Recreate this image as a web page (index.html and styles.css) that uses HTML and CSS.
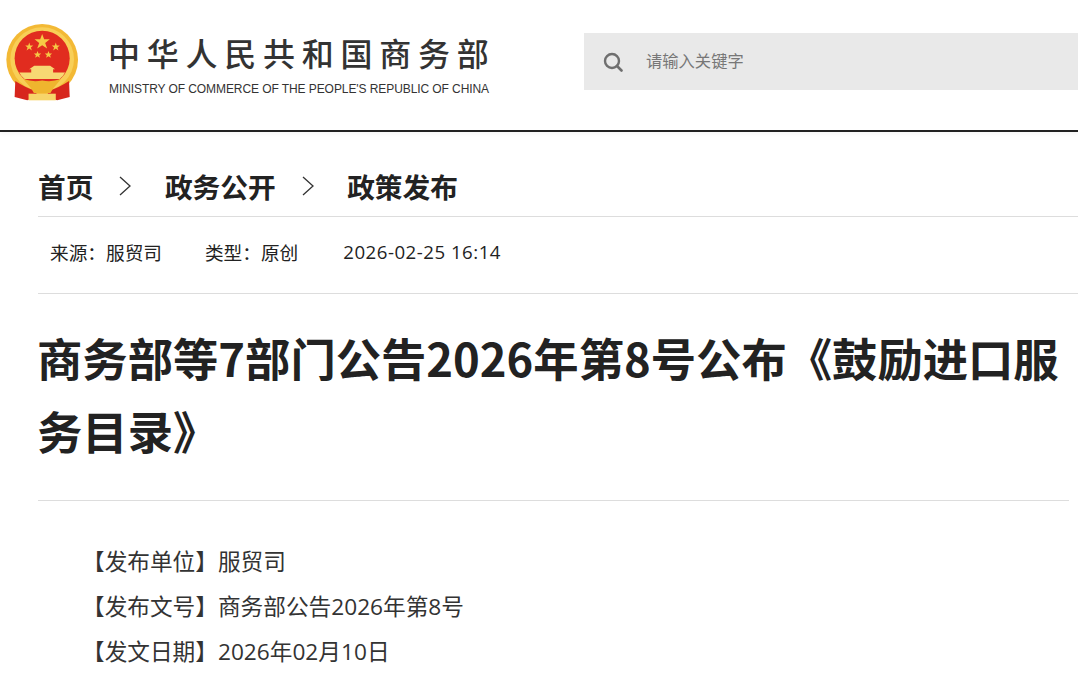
FILE: index.html
```html
<!DOCTYPE html>
<html lang="zh-CN">
<head>
    <meta charset="UTF-8">
    <title>商务部等7部门公告2026年第8号公布《鼓励进口服务目录》</title>
    <link rel="stylesheet" href="styles.css">
</head>
<body>
    <header class="top">
        <div class="brand">
            <svg class="emblem" width="73" height="77" viewBox="18 42 220 232">
                <circle cx="127" cy="150" r="108" fill="#f3b935"/>
                <circle cx="127" cy="148" r="96" fill="#f8cf57"/>
                <circle cx="127" cy="145" r="83" fill="#e12c1f"/>
                <polygon fill="#f6c945" points="127,72 133,88 150,88 136,99 142,116 127,106 112,116 118,99 104,88 121,88"/>
                <polygon fill="#f6c945" points="88,98 91,107 100,107 93,113 96,122 88,116 80,122 83,113 76,107 85,107"/>
                <polygon fill="#f6c945" points="168,98 171,107 180,107 173,113 176,122 168,116 160,122 163,113 156,107 165,107"/>
                <polygon fill="#f6c945" points="113,123 116,131 124,131 118,136 120,144 113,139 106,144 108,136 102,131 110,131"/>
                <polygon fill="#f6c945" points="146,123 149,131 157,131 151,136 153,144 146,139 139,144 141,136 135,131 143,131"/>
                <path d="M103 168 H151 L166 178 H160 V188 H196 Q190 200 180 208 H74 Q64 200 58 188 H94 V178 H88 Z" fill="#f7d873"/>
                <path d="M46 214 Q80 236 108 244 L112 262 L82 272 L44 262 Z" fill="#d7261d"/>
                <path d="M208 214 Q174 236 146 244 L142 262 L172 272 L210 262 Z" fill="#d7261d"/>
                <path d="M70 208 Q100 218 127 212 Q154 218 184 208 L160 236 L152 250 H102 L94 236 Z" fill="#efb52e"/>
                <rect x="86" y="252" width="82" height="20" fill="#f7d56a"/>
            </svg>
            <div class="brand-text">
                <div class="brand-cn">中华人民共和国商务部</div>
                <div class="brand-en">MINISTRY OF COMMERCE OF THE PEOPLE'S REPUBLIC OF CHINA</div>
            </div>
        </div>
        <div class="search">
            <svg class="search-icon" width="20" height="20" viewBox="0 0 20 20">
                <circle cx="9" cy="9" r="7" fill="none" stroke="#6f6f6f" stroke-width="2.4"/>
                <path d="M14 14 L18.5 18.5" stroke="#6f6f6f" stroke-width="2.6" stroke-linecap="round"/>
            </svg>
            <span class="search-hint">请输入关键字</span>
        </div>
    </header>

    <main class="page">
        <nav class="crumbs">
            <a>首页</a>
            <svg class="arrow" width="14" height="20" viewBox="0 0 14 20"><path d="M2 1 L12 10 L2 19" fill="none" stroke="#333" stroke-width="1.3"/></svg>
            <a>政务公开</a>
            <svg class="arrow" width="14" height="20" viewBox="0 0 14 20"><path d="M2 1 L12 10 L2 19" fill="none" stroke="#333" stroke-width="1.3"/></svg>
            <a>政策发布</a>
        </nav>
        <div class="meta">
            <span>来源&#xFF1A;服贸司</span>
            <span>类型&#xFF1A;原创</span>
            <span class="date">2026-02-25 16:14</span>
        </div>
        <div class="article">
            <div class="title-wrap">
                <h1 class="title">商务部等7部门公告2026年第8号公布《鼓励进口服务目录》</h1>
            </div>
            <div class="content">
                <p>【发布单位】服贸司</p>
                <p>【发布文号】商务部公告2026年第8号</p>
                <p>【发文日期】2026年02月10日</p>
            </div>
        </div>
    </main>
</body>
</html>
```
FILE: styles.css
```css
*, *::after, *::before{
    margin: 0;
    padding: 0;
    box-sizing: border-box;
}
html, body{
    height: 100%;
    overflow: hidden;
}
body{
    background-color: #fff;
    color: #222;
    font-family: "Noto Sans CJK SC", "Noto Sans", sans-serif;
}
.top{
    height: 132px;
    border-bottom: 2px solid #222;
    box-shadow: 0 2px 4px rgba(0,0,0,0.04);
    display: flex;
    align-items: flex-start;
    justify-content: space-between;
}
.brand{
    display: flex;
    align-items: flex-start;
    padding: 24px 0 0 6px;
}
.emblem{
    flex: none;
}
.brand-text{
    margin-left: 30px;
    color: #333;
}
.brand-cn{
    font-size: 32px;
    font-weight: 500;
    line-height: 40px;
    letter-spacing: 6.75px;
    margin: 8px 0 0 -1px;
    white-space: nowrap;
}
.brand-en{
    font-family: "Liberation Sans", sans-serif;
    font-size: 12px;
    line-height: 14px;
    letter-spacing: -0.08px;
    margin-top: 10px;
    white-space: nowrap;
}
.search{
    width: 494px;
    height: 57px;
    margin-top: 33px;
    background-color: #e9e9e9;
    display: flex;
    align-items: center;
    padding-left: 19px;
}
.search-hint{
    margin-left: 23px;
    margin-bottom: 3px;
    font-size: 16.3px;
    color: #777;
}
.page{
    padding-left: 38px;
}
.crumbs{
    height: 85px;
    border-bottom: 1px solid #ddd;
    display: flex;
    align-items: center;
    padding-top: 24px;
    font-size: 27.7px;
    font-weight: 700;
    line-height: 40px;
    color: #222;
}
.arrow{
    margin: 0 32.5px 0 25px;
}
.meta{
    height: 77px;
    border-bottom: 1px solid #ddd;
    display: flex;
    align-items: center;
    gap: 43px;
    padding: 0 0 8px 12px;
    font-size: 18.67px;
    color: #222;
}
.date{
    margin-left: 2px;
    font-family: "Open Sans", "Noto Sans CJK SC", sans-serif;
    letter-spacing: 0.5px;
}
.article{
    width: 1031px;
}
.title-wrap{
    padding: 27px 0 33px;
    border-bottom: 1px solid #ddd;
}
.title{
    margin-left: -1px;
    font-size: 45.33px;
    line-height: 73px;
    font-weight: 700;
    color: #222;
}
.content{
    padding-top: 38px;
    font-family: "Open Sans", "Noto Sans CJK SC", sans-serif;
    font-size: 22.67px;
    line-height: 45px;
    color: #333;
}
.content p{
    text-indent: 44px;
}
```
